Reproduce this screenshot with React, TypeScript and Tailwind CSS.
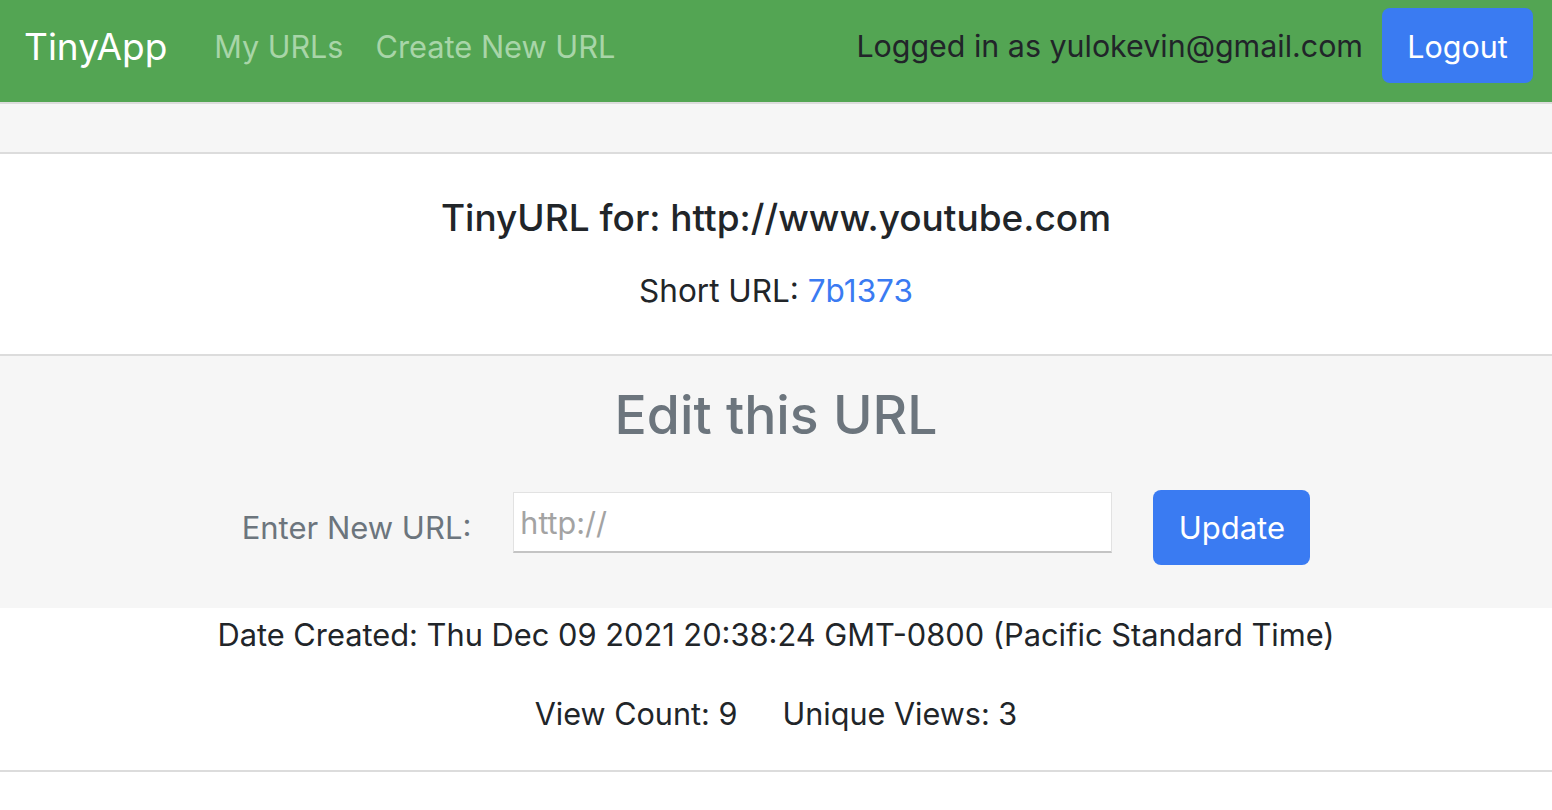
export default function App() {
  return (
    <div className="min-h-[810px] bg-white text-[#212529]" style={{ fontFamily: 'Inter, "Noto Sans", sans-serif' }}>
      {/* navbar */}
      <nav className="flex h-[102px] items-start justify-between bg-[#53a553] pl-[24px] pr-[19px] pt-2">
        <div className="flex h-[75px] items-center pt-[3px]">
          <span className="text-[37px] text-white">TinyApp</span>
          <a className="ml-[47px] text-[30.5px] text-[#a8d5a8]">My URLs</a>
          <a className="ml-[32px] text-[30.8px] text-[#a8d5a8]">Create New URL</a>
        </div>
        <div className="flex h-[75px] items-center">
          <span className="pt-[3px] text-[30.4px] text-[#212529]">Logged in as yulokevin@gmail.com</span>
          <button className="ml-[19px] h-[75px] w-[151px] rounded-lg bg-[#3a7bf2] pt-[3px] text-[30.5px] text-white">Logout</button>
        </div>
      </nav>

      <div className="h-[52px] border-y-2 border-[#dcdcdc] bg-[#f6f6f6]" />

      {/* url info */}
      <section className="flex h-[200px] flex-col items-center justify-center">
        <h2 className="mt-[-4px] text-[37px] font-medium">TinyURL for: http://www.youtube.com</h2>
        <p className="mt-[22px] text-[31.5px]">
          Short URL: <a className="text-[#3a7bf2]">7b1373</a>
        </p>
      </section>

      {/* edit form */}
      <section className="flex h-[254px] flex-col items-center border-t-2 border-[#dcdcdc] bg-[#f6f6f6] pt-[19px]">
        <h1 className="text-[53.5px] font-medium text-[#6c757d]">Edit this URL</h1>
        <form className="mt-[35px] flex items-start">
          <label className="mt-[15px] text-[31px] text-[#6c757d]">Enter New URL:</label>
          <input
            placeholder="http://"
            className="ml-[42px] mt-[2px] h-[61px] w-[599px] border border-b-2 border-[#e2e2e2] border-b-[#c4c4c4] bg-white px-[6px] text-[30.5px] text-[#212529] outline-none placeholder:text-[#a3a3a3]"
          />
          <button type="button" className="ml-[41px] h-[75px] w-[157px] rounded-lg bg-[#3a7bf2] text-[31px] text-white">
            Update
          </button>
        </form>
      </section>

      {/* stats */}
      <section className="flex h-[164px] flex-col items-center border-b-2 border-[#dcdcdc]">
        <p className="mt-[4px] text-[30.8px]">Date Created: Thu Dec 09 2021 20:38:24 GMT-0800 (Pacific Standard Time)</p>
        <p className="mt-[33px] flex gap-[45px] text-[30.6px]">
          <span>View Count: 9</span>
          <span>Unique Views: 3</span>
        </p>
      </section>
    </div>
  )
}
